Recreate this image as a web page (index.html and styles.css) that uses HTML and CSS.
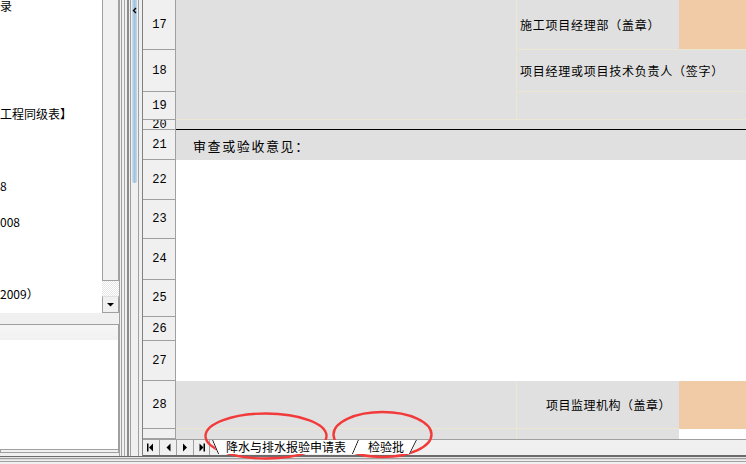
FILE: index.html
```html
<!DOCTYPE html>
<html>
<head>
<meta charset="utf-8">
<title>Sheet</title>
<link rel="stylesheet" href="styles.css">
</head>
<body>
<div class="app">
  <div class="main">
    <div class="left">
      <div class="tree">
        <div class="tree-body">
          <div class="tree-list">
            <div class="ti">录</div>
            <div class="ti"></div><div class="ti"></div><div class="ti"></div><div class="ti"></div><div class="ti"></div>
            <div class="ti">工程同级表】</div>
            <div class="ti"></div><div class="ti"></div><div class="ti"></div>
            <div class="ti">8</div>
            <div class="ti"></div>
            <div class="ti">008</div>
            <div class="ti"></div><div class="ti"></div><div class="ti"></div>
            <div class="ti">2009）</div>
          </div>
        </div>
        <div class="vscroll">
          <div class="vthumb"></div>
          <div class="vtrack"></div>
          <div class="vbtn">
            <svg width="15" height="15" viewBox="0 0 15 15"><polygon points="4,6 11,6 7.5,9.5" fill="#000"/></svg>
          </div>
        </div>
      </div>
      <div class="panel2">
        <div class="p2head"></div>
      </div>
    </div>

    <div class="splitter">
      <div class="sthumb">
        <svg width="6" height="16" viewBox="0 0 6 16"><polyline points="4,8 1.5,10.5 4,13" fill="none" stroke="#000" stroke-width="1.4"/></svg>
      </div>
    </div>

    <div class="sheet">
      <div class="grid">
        <div class="row r17">
          <div class="rh">17</div>
          <div class="c g"></div>
          <div class="c g vl bl txt">施工项目经理部（盖章）</div>
          <div class="c o bl"></div>
        </div>
        <div class="row r18">
          <div class="rh">18</div>
          <div class="c g"></div>
          <div class="c g vl bl txt span2">项目经理或项目技术负责人（签字）</div>
        </div>
        <div class="row r19">
          <div class="rh">19</div>
          <div class="c g bl"></div>
          <div class="c g vl bl span2"></div>
        </div>
        <div class="row r20">
          <div class="rh">20</div>
          <div class="c g span3 blk"></div>
        </div>
        <div class="row r21">
          <div class="rh">21</div>
          <div class="c g span3 opinion">审查或验收意见：</div>
        </div>
        <div class="row r22"><div class="rh">22</div><div class="c w span3"></div></div>
        <div class="row r23"><div class="rh">23</div><div class="c w span3"></div></div>
        <div class="row r24"><div class="rh">24</div><div class="c w span3"></div></div>
        <div class="row r25"><div class="rh">25</div><div class="c w span3"></div></div>
        <div class="row r26"><div class="rh">26</div><div class="c w span3"></div></div>
        <div class="row r27"><div class="rh">27</div><div class="c w span3"></div></div>
        <div class="row r28">
          <div class="rh">28</div>
          <div class="c g bl"></div>
          <div class="c g vl bl txt right">项目监理机构（盖章）</div>
          <div class="c o"></div>
        </div>
        <div class="row r29">
          <div class="rh"></div>
          <div class="c g"></div>
          <div class="c g vl"></div>
          <div class="c w"></div>
        </div>
      </div>

      <div class="tabbar">
        <div class="nav">
          <div class="nb"><svg width="16" height="15" viewBox="0 0 16 15"><rect x="4" y="3.5" width="1.5" height="8" fill="#000"/><polygon points="10,3.5 10,11.5 6,7.5" fill="#000"/></svg></div>
          <div class="nb"><svg width="16" height="15" viewBox="0 0 16 15"><polygon points="10.5,3.5 10.5,11.5 6.5,7.5" fill="#000"/></svg></div>
          <div class="nb"><svg width="16" height="15" viewBox="0 0 16 15"><polygon points="6,3.5 6,11.5 10,7.5" fill="#000"/></svg></div>
          <div class="nb last"><svg width="15" height="15" viewBox="0 0 15 15"><polygon points="5.5,3.5 5.5,11.5 9.5,7.5" fill="#000"/><rect x="9.5" y="3.5" width="1.5" height="8" fill="#000"/></svg></div>
        </div>
        <div class="tabs">
          <div class="tab active">
            <svg class="edges" viewBox="0 0 147 14" preserveAspectRatio="none"><path d="M0.5,0 L6.5,14 M146.5,0 L140.5,14" stroke="#000" stroke-width="1" fill="none"/></svg>
            <span class="tl">降水与排水报验申请表</span>
          </div>
          <div class="tab second">
            <svg class="edges" viewBox="0 0 65 14" preserveAspectRatio="none"><path d="M64.5,0 L57.5,14" stroke="#000" stroke-width="1" fill="none"/></svg>
            <span class="tl">检验批</span>
          </div>
        </div>
      </div>
    </div>
  </div>
  <div class="frame-bottom"></div>
</div>

<svg class="marks" width="746" height="464" viewBox="0 0 746 464">
  <ellipse cx="266" cy="436" rx="60.5" ry="22.5" fill="none" stroke="#f23a3a" stroke-width="2.4"/>
  <ellipse cx="382.5" cy="434.5" rx="49" ry="22.5" fill="none" stroke="#f23a3a" stroke-width="2.4"/>
</svg>
</body>
</html>
```

FILE: styles.css
```css
* { box-sizing: border-box; margin: 0; padding: 0; }
html, body { width: 746px; height: 464px; overflow: hidden; }
body {
  background: #f0f0f0;
  font-family: "Noto Sans CJK SC", "Liberation Sans", sans-serif;
  font-size: 12px;
  color: #000;
  position: relative;
}
.app { display: flex; flex-direction: column; width: 746px; height: 464px; }
.main { display: flex; height: 456px; }

/* left panel */
.left {
  width: 120px;
  display: flex;
  flex-direction: column;
  border-right: 1px solid #a0a0a0;
}
.tree { display: flex; height: 313px; }
.tree-body { width: 102px; background: #fff; overflow: hidden; }
.tree-list { margin-top: -3px; }
.ti { height: 18px; line-height: 18px; white-space: nowrap; font-size: 12px; }
.vscroll { width: 17px; display: flex; flex-direction: column; }
.vthumb {
  height: 281px;
  background: #f0f0f0;
  border-left: 1px solid #a0a0a0;
  border-right: 1px solid #a0a0a0;
  border-bottom: 1px solid #a0a0a0;
}
.vtrack {
  height: 15px;
  background: repeating-conic-gradient(#ffffff 0 25%, #e6e6e6 0 50%) 0 0 / 2px 2px;
}
.vbtn {
  height: 17px;
  background: #f0f0f0;
  border: 1px solid #a0a0a0;
  border-top-color: #e0e0e0;
  display: flex;
  align-items: center;
  justify-content: center;
}
.panel2 {
  margin-top: 11px;
  height: 126px;
  width: 119px;
  background: #fff;
  border-top: 1px solid #a0a0a0;
  border-right: 1px solid #a0a0a0;
  border-bottom: 1px solid #a0a0a0;
  box-shadow: 0 3px 0 -1px #f0f0f0, 0 3px 0 0 #a0a0a0;
}
.p2head { height: 15px; background: linear-gradient(#f6f6f6, #f1f1f1); }

/* splitter */
.splitter {
  width: 22px;
  background: linear-gradient(to right,
    #f0f0f0 0 1px, #a0a0a0 1px 2px, #f0f0f0 2px 4px, #a8a8a8 4px 5px,
    #f0f0f0 5px 7px, #8c8c8c 7px 9px, #f0f0f0 9px 10px, #a0a0a0 10px 11px,
    #f0f0f0 11px 18px, #a0a0a0 18px 19px, #f0f0f0 19px 22px);
}
.sthumb {
  margin-left: 12px;
  width: 5px;
  height: 183px;
  background: linear-gradient(to right, #cfe0ee, #9fc2dd 50%, #c4d9ea);
  border-radius: 0 0 2px 2px;
}
.sthumb svg { display: block; }

/* sheet */
.sheet {
  flex: 1;
  display: flex;
  flex-direction: column;
  border-left: 1px solid #808080;
}
.grid { height: 439px; overflow: hidden; }
.row {
  display: grid;
  grid-template-columns: 33px 340px 163px 67px;
}
.r17 { height: 50px; }
.r18 { height: 42px; }
.r19 { height: 28px; }
.r20 { height: 10px; }
.r21 { height: 30px; }
.r22 { height: 40px; }
.r23 { height: 39px; }
.r24 { height: 41px; }
.r25 { height: 37px; }
.r26 { height: 24px; }
.r27 { height: 40px; }
.r28 { height: 48px; }
.r29 { height: 10px; }

.rh {
  background: #f0f0f0;
  border-right: 1px solid #a0a0a0;
  border-bottom: 1px solid #a0a0a0;
  display: flex;
  align-items: center;
  justify-content: center;
  font-family: "Liberation Mono", "DejaVu Sans Mono", monospace;
  font-size: 12px;
  overflow: hidden;
  padding-left: 1px;
}
.c { min-width: 0; overflow: hidden; white-space: nowrap; }
.g { background: #e0e0e0; }
.w { background: #ffffff; }
.o { background: #f1caa6; }
.vl { border-left: 1px solid #ebe7d2; }
.bl { border-bottom: 1px solid #ebe7d2; }
.blk { border-bottom: 1px solid #000; }
.span2 { grid-column: span 2; }
.span3 { grid-column: span 3; }
.txt {
  display: flex;
  align-items: center;
  padding-left: 3px;
  letter-spacing: 0.75px;
}
.txt.right { justify-content: flex-end; padding-right: 8px; letter-spacing: 0.5px; }
.opinion {
  display: flex;
  align-items: center;
  padding-left: 17px;
  font-size: 13px;
  letter-spacing: 1.6px;
}

/* tab bar */
.tabbar {
  height: 17px;
  display: flex;
  background: #f0f0f0;
  border-top: 1px solid #a0a0a0;
  border-bottom: 1px solid #6a6a6a;
}
.nav { display: flex; }
.nb {
  width: 17px;
  height: 15px;
  border-right: 1px solid #a0a0a0;
  display: flex;
  align-items: center;
}
.nb.last { width: 16px; }
.nb svg { display: block; }
.tabs { display: flex; padding-left: 2px; }
.tab {
  position: relative;
  height: 14px;
  display: flex;
  align-items: center;
}
.tab .edges { position: absolute; left: 0; top: 0; width: 100%; height: 100%; }
.tab .edges path { vector-effect: non-scaling-stroke; }
.tab.active {
  width: 147px;
  padding-left: 14px;
  background: #fff;
  clip-path: polygon(0 0, 100% 0, calc(100% - 6px) 100%, 6px 100%);
  z-index: 2;
}
.tab.second {
  width: 65px;
  margin-left: -7px;
  padding-left: 16px;
  background: #fff;
  clip-path: polygon(0 0, 100% 0, calc(100% - 7px) 100%, 0 100%);
  z-index: 1;
}
.tl { font-size: 12px; line-height: 14px; white-space: nowrap; position: relative; }

.frame-bottom {
  height: 8px;
  background: linear-gradient(to bottom,
    #6d6d6d 0 1px, #e4e4e4 1px 2px, #a0a0a0 2px 3px, #d8d8d8 3px 4px,
    #f0f0f0 4px 5px, #a0a0a0 5px 6px, #f0f0f0 6px 8px);
}

.marks { position: absolute; left: 0; top: 0; pointer-events: none; }
```
